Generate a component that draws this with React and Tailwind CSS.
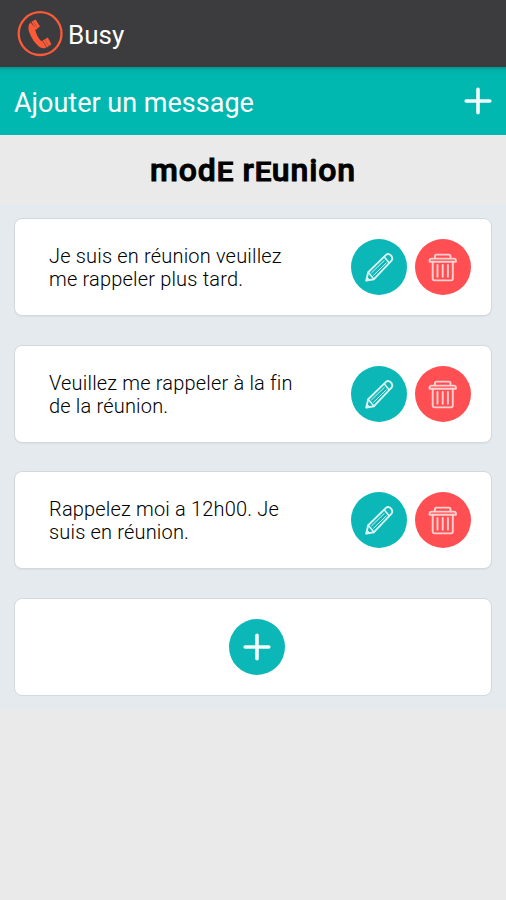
import React from 'react';

const messages = [
  { id: 1, lines: ['Je suis en réunion veuillez', 'me rappeler plus tard.'] },
  { id: 2, lines: ['Veuillez me rappeler à la fin', 'de la réunion.'] },
  { id: 3, lines: ['Rappelez moi a 12h00. Je', 'suis en réunion.'] },
];

const PhoneLogo = () => (
  <svg viewBox="0 0 46 46" className="w-[46px] h-[46px] shrink-0" fill="none">
    <circle cx="23.1" cy="22.6" r="21.4" stroke="#ff5a38" strokeWidth="2.3" />
    <path
      d="M13.6 11.4 C10.8 13.6 11 18 12.8 22.6 C14.8 27.6 18 32.4 21.8 35.6 C24.4 37.6 27 37.8 29.4 36.4 L25.4 29.8 C24 30.2 23.2 29.6 22 27.6 C20.4 25 19.4 23 18.8 21 C18.4 19.4 18.4 18.6 19.2 17.8 Z"
      fill="#ff5a38"
    />
    <path d="M14.4 10.8 L18.6 8.4 L23 15.6 L19.2 18.4 Z M25.8 29.6 L30.8 26.4 L34.4 33.2 L30 36.4 Z" fill="#ff5a38" />
    <path d="M16.2 10.4 L20.6 17M28 28.6 L31.8 35" stroke="#3c3c3e" strokeWidth="0.3" />
  </svg>
);

const PlusIcon = () => (
  <svg viewBox="0 0 28 28" className="w-7 h-7" stroke="#f2fcfb" strokeWidth="3.6" strokeLinecap="round">
    <path d="M14 2.2v23.6M2.2 14h23.6" />
  </svg>
);

const PencilIcon = () => (
  <svg viewBox="0 0 56 56" className="w-14 h-14" fill="none" stroke="#d9f3f2" strokeWidth="1.6" strokeLinejoin="round" strokeLinecap="round">
    <path d="M15.2 41.6l2-8.3L35 15.9q1.2-1.1 2.8-.8 1.6.4 2.5 1.8.9 1.3 1 2.8 0 1.2-1 2.2L23 40.2z" strokeWidth="1.9" />
    <path d="M17.2 33.3l5.8 6.9M33.2 17.8l4.9 6" />
    <path d="M20.6 33.8L33.2 21.6M22.6 36.2L35.2 24" strokeWidth="1" />
    <path d="M15.2 41.6l.9-3.4 2.4 2.5z" fill="#d9f3f2" strokeWidth="1" />
  </svg>
);

const TrashIcon = () => (
  <svg viewBox="0 0 56 56" className="w-14 h-14" fill="none" stroke="#ffd0d0" strokeWidth="1.9" strokeLinejoin="round" strokeLinecap="round">
    <path d="M17.7 22.8h-3.1v-1.2q0-2 2-2h22.3q2 0 2 2v1.2h-3.1V39.6q0 1.8-1.8 1.8H19.5q-1.8 0-1.8-1.8z" />
    <path d="M17.7 22.8h20.1M19.9 19.2v-2q0-1.6 1.6-1.6h12.4q1.6 0 1.6 1.6v2" />
    <path d="M22.5 26v11.8M27.7 26v11.8M32.9 26v11.8" />
  </svg>
);

const MessageCard = ({ lines }) => (
  <div className="h-[98px] bg-white border border-[#d2d8dc] rounded-lg flex items-center justify-between pl-[34px] pr-5 shadow-[0_1px_1px_rgba(0,0,0,0.04)]">
    <p className="text-[20px] leading-[23px] tracking-[0.18px] text-black font-light whitespace-nowrap pt-[2px]">
      {lines[0]}
      <br />
      {lines[1]}
    </p>
    <div className="flex gap-2">
      <button type="button" className="w-14 h-14 rounded-full bg-[#0bb7b7]">
        <PencilIcon />
      </button>
      <button type="button" className="w-14 h-14 rounded-full bg-[#ff4f52]">
        <TrashIcon />
      </button>
    </div>
  </div>
);

// Lowercase-height capital E used by the section title
const WideE = () => <span className="inline-block text-[25px] scale-x-[1.18] mx-[1px]">E</span>;

const App = () => {
  return (
    <div className="w-[506px] h-[900px] overflow-hidden bg-[#eaeaea] font-['Roboto',sans-serif]">
      {/* App bar */}
      <header className="h-[67px] bg-[#3c3c3e] flex items-center pl-[17px] gap-[5px]">
        <PhoneLogo />
        <h1 className="text-[26px] leading-none text-white pt-[3px]">Busy</h1>
      </header>

      {/* Add message bar */}
      <div className="h-[68px] bg-[linear-gradient(#04978f_0px,#00aea6_3px,#00b8b0_8px)] flex items-center justify-between px-[14px]">
        <span className="text-[27px] leading-none text-white pt-1">Ajouter un message</span>
        <PlusIcon />
      </div>

      <div className="h-[69px] flex items-center justify-center">
        <h2 className="text-[32px] leading-none font-medium text-black whitespace-nowrap tracking-[0.9px] [-webkit-text-stroke:1px_black]">
          mod<WideE /> r<WideE />union
        </h2>
      </div>

      {/* Message list */}
      <div className="h-[506px] bg-[#e4eaed] px-[14px] pt-[14px] flex flex-col gap-[28.6px]">
        {messages.map((message) => (
          <MessageCard key={message.id} lines={message.lines} />
        ))}
        <div className="h-[98px] bg-white border border-[#d2d8dc] rounded-lg flex items-center justify-center pl-[7px]">
          <button type="button" className="w-14 h-14 rounded-full bg-[#0bb7b7] flex items-center justify-center">
            <PlusIcon />
          </button>
        </div>
      </div>
    </div>
  );
};

export default App;
